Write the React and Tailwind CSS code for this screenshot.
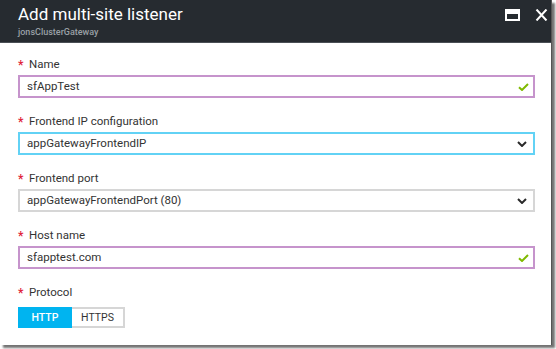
import React from "react";

function Label({ children }) {
  return (
    <div className="h-4 leading-4 text-[11.5px] text-[#333] flex items-center">
      <span className="text-[#e0243a] text-[12px] w-[11px] leading-4 pt-[2px] font-bold">*</span>
      <span>{children}</span>
    </div>
  );
}

function Check() {
  return (
    <svg width="11" height="8" viewBox="0 0 11 8" className="shrink-0">
      <path d="M1 4.2 L4 7 L10 1" fill="none" stroke="#7fba00" strokeWidth="2" />
    </svg>
  );
}

function Chevron() {
  return (
    <svg width="10" height="6" viewBox="0 0 10 6" className="shrink-0">
      <path d="M1 1 L5 5 L9 1" fill="none" stroke="#2a2a2a" strokeWidth="2" />
    </svg>
  );
}

export default function App() {
  return (
    <div className="w-[556px] h-[349px] bg-white" style={{ fontFamily: "Roboto, 'Open Sans', sans-serif" }}>
      <div className="w-[552px] h-[345px] bg-white flex flex-col shadow-[3px_3px_2px_rgba(0,0,0,0.55)] border-r border-[#555]">
        {/* header */}
        <div className="h-[43px] bg-[#262b30] border-b border-[#4a4f55] flex items-start justify-between pl-[18px] pr-[3px]">
          <div className="pt-[3px]">
            <div className="text-white text-[17px] leading-[22px]">Add multi-site listener</div>
            <div className="text-[#9aa0a6] text-[9px] leading-[10px] mt-[2px] font-medium">jonsClusterGateway</div>
          </div>
          <div className="flex items-center gap-[15px] pt-[9px]">
            <svg width="15" height="12" viewBox="0 0 15 12">
              <rect x="1" y="1" width="13" height="10" fill="none" stroke="#fff" strokeWidth="2" />
              <rect x="1" y="2" width="13" height="3" fill="#fff" />
            </svg>
            <svg width="13" height="12" viewBox="0 0 13 12">
              <path d="M1.5 0.5 L11.5 11.5 M11.5 0.5 L1.5 11.5" stroke="#fff" strokeWidth="2" />
            </svg>
          </div>
        </div>

        {/* form */}
        <div className="flex flex-col gap-[15px] pt-[13px] pl-[18px] pr-[16px]">
          <div className="flex flex-col gap-[3px]">
            <Label>Name</Label>
            <div className="h-[23px] border-2 border-[#c694cc] flex items-center justify-between pl-[7px] pr-[4px] text-[11.5px] text-[#333]">
              <span>sfAppTest</span>
              <Check />
            </div>
          </div>

          <div className="flex flex-col gap-[3px]">
            <Label>Frontend IP configuration</Label>
            <div className="h-[23px] border-2 border-[#62d2f5] flex items-center justify-between pl-[7px] pr-[6px] text-[11.5px] text-[#333]">
              <span>appGatewayFrontendIP</span>
              <Chevron />
            </div>
          </div>

          <div className="flex flex-col gap-[3px]">
            <Label>Frontend port</Label>
            <div className="h-[23px] border-2 border-[#d6d6d6] flex items-center justify-between pl-[7px] pr-[6px] text-[11.5px] text-[#333]">
              <span>appGatewayFrontendPort (80)</span>
              <Chevron />
            </div>
          </div>

          <div className="flex flex-col gap-[3px]">
            <Label>Host name</Label>
            <div className="h-[23px] border-2 border-[#c694cc] flex items-center justify-between pl-[7px] pr-[4px] text-[11.5px] text-[#333]">
              <span>sfapptest.com</span>
              <Check />
            </div>
          </div>

          <div className="flex flex-col gap-[7px]">
            <Label>Protocol</Label>
            <div className="flex">
              <div className="w-[54px] h-[21px] bg-[#00b4f0] flex items-center justify-center text-white text-[10.5px] font-medium">HTTP</div>
              <div className="w-[53px] h-[21px] border-2 border-l-0 border-[#d6d6d6] flex items-center justify-center text-[#333] text-[10.5px]">HTTPS</div>
            </div>
          </div>
        </div>
      </div>
    </div>
  );
}
